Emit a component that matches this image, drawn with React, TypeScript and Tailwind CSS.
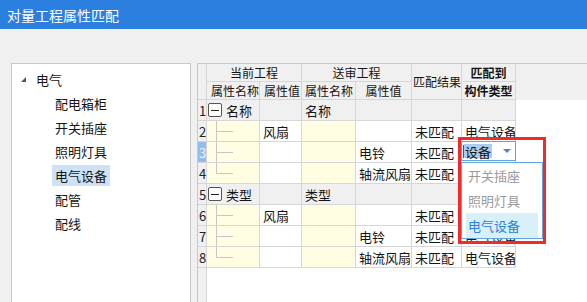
import React from "react";

const line = "border-[#d6d6d6]";

type Row = {
  n: number;
  group?: string;
  v1?: string;
  v3?: string;
  res?: string;
  type?: string;
  tree?: "mid" | "end";
};

// rows 4 and 6 sit under the open dropdown, so their type cell is left blank
const rows: Row[] = [
  { n: 1, group: "名称" },
  { n: 2, v1: "风扇", res: "未匹配", type: "电气设备", tree: "mid" },
  { n: 3, v3: "电铃", res: "未匹配", type: "", tree: "mid" },
  { n: 4, v3: "轴流风扇", res: "未匹配", type: "", tree: "end" },
  { n: 5, group: "类型" },
  { n: 6, v1: "风扇", res: "未匹配", type: "", tree: "mid" },
  { n: 7, v3: "电铃", res: "未匹配", type: "电气设备", tree: "mid" },
  { n: 8, v3: "轴流风扇", res: "未匹配", type: "电气设备", tree: "end" },
];

const treeItems = ["配电箱柜", "开关插座", "照明灯具", "电气设备", "配管", "配线"];

function TreeLine({ kind }: { kind: "mid" | "end" }) {
  return (
    <svg width="52" height="20" className="block">
      <line x1="9.5" y1="0" x2="9.5" y2={kind === "mid" ? 20 : 10.5} stroke="#c6c6c6" />
      <line x1="9.5" y1="10.5" x2="26" y2="10.5" stroke="#c6c6c6" />
    </svg>
  );
}

function Cell({ children, bg = "bg-white", className = "" }: { children?: React.ReactNode; bg?: string; className?: string }) {
  return (
    <div className={`h-[21px] border-r border-b ${line} ${bg} flex items-center overflow-hidden whitespace-nowrap leading-none pl-[3px] ${className}`}>
      {children}
    </div>
  );
}

function HeadCell({ children, className = "" }: { children?: React.ReactNode; className?: string }) {
  return (
    <div className={`border-r border-b ${line} flex items-center justify-center overflow-hidden whitespace-nowrap leading-none text-[12px] ${className}`}>
      {children}
    </div>
  );
}

export default function App() {
  return (
    <div className="w-[587px] h-[302px] overflow-hidden bg-[#f0f0f0] font-['Noto_Sans_CJK_SC',sans-serif] text-[13px] text-[#141414]">
      <div className="h-[29px] bg-[#2b7fdf] text-white text-[14px] pl-[7px] flex items-center leading-none">
        对量工程属性匹配
      </div>

      <div className="flex pt-[34px] h-[273px]">
        {/* left tree */}
        <div className="ml-[11px] w-[180px] h-[250px] shrink-0 bg-white border border-[#c9c9c9] pt-[3px]">
          <div className="h-[24px] flex items-center pl-[9px] leading-none">
            <svg width="5" height="5" className="mr-[10px]">
              <polygon points="5,0 5,5 0,5" fill="#555" />
            </svg>
            <span>电气</span>
          </div>
          {treeItems.map((t) => (
            <div key={t} className="h-[24px] flex items-center pl-[40px] leading-none">
              <span className={`h-[21px] flex items-center px-[3px] ${t === "电气设备" ? "bg-[#cde2f6]" : ""}`}>{t}</span>
            </div>
          ))}
        </div>

        {/* grid panel */}
        <div className="relative ml-[6px] flex-1 flex flex-col bg-white border-t border-l border-[#c8c8c8]">
          <div className="flex bg-[#f0f0f0] shrink-0">
            <div className="grid grid-cols-[9px_53px_42px_54px_56px_50px_54px] grid-rows-[18px_18px]">
              <HeadCell className="row-span-2" />
              <HeadCell className="col-span-2">当前工程</HeadCell>
              <HeadCell className="col-span-2">送审工程</HeadCell>
              <HeadCell className="row-span-2 !justify-start pl-[1px]">匹配结果</HeadCell>
              <HeadCell className="font-bold">匹配到</HeadCell>
              <HeadCell className="!justify-start pl-[4px]">属性名称</HeadCell>
              <HeadCell className="!justify-start pl-[4px]">属性值</HeadCell>
              <HeadCell className="!justify-start pl-[3px]">属性名称</HeadCell>
              <HeadCell>属性值</HeadCell>
              <HeadCell className="font-bold">构件类型</HeadCell>
            </div>
          </div>

          <div className="flex flex-1">
            <div className={`w-[9px] bg-[#f0f0f0] border-r ${line} flex flex-col`}>
              {rows.map((r) => (
                <div
                  key={r.n}
                  className={`h-[21px] border-b ${line} flex items-center leading-none pl-[1px] ${r.n === 3 ? "bg-[#8fbdee] text-[#e8f3ff]" : "text-[#222]"}`}
                >
                  {r.n}
                </div>
              ))}
            </div>

            <div className="grid grid-cols-[53px_42px_54px_56px_50px_54px] auto-rows-[21px] content-start">
              {rows.map((r) =>
                r.group ? (
                  <React.Fragment key={r.n}>
                    <Cell bg="bg-[#f0f0f0]" className="!pl-[1px]">
                      <span className="w-[14px] h-[14px] border border-[#555] rounded-[2px] bg-white flex items-center justify-center mr-[4px] shrink-0">
                        <span className="w-[8px] h-px bg-[#222]" />
                      </span>
                      {r.group}
                    </Cell>
                    <Cell bg="bg-[#f0f0f0]" />
                    <Cell bg="bg-[#f0f0f0]">{r.group}</Cell>
                    <Cell bg="bg-[#f0f0f0]" />
                    <Cell bg="bg-[#f0f0f0]" />
                    <Cell bg="bg-[#f0f0f0]" />
                  </React.Fragment>
                ) : (
                  <React.Fragment key={r.n}>
                    <Cell bg="bg-[#fffee2]" className="!pl-0">
                      <TreeLine kind={r.tree!} />
                    </Cell>
                    <Cell>{r.v1}</Cell>
                    <Cell bg="bg-[#fffee2]" />
                    <Cell>{r.v3}</Cell>
                    <Cell>{r.res}</Cell>
                    <Cell>{r.type}</Cell>
                  </React.Fragment>
                )
              )}
            </div>
          </div>

          {/* editing combo + dropdown */}
          <div className="absolute left-[263px] top-[77px] w-[55px] h-[20px] bg-white border border-[#5ea6dd] flex items-center leading-none">
            <span className="w-px h-[13px] bg-[#555] ml-px" />
            <span className="h-[14px] bg-[#a9cdf0] flex items-center pl-[1px] pr-[1px]">设备</span>
            <svg width="8" height="4" className="ml-[11px]">
              <polygon points="0,0 8,0 4,4" fill="#4a88c8" />
            </svg>
          </div>
          <div className="absolute left-[263px] top-[98px] w-[82px] h-[77px] bg-white border border-[#5ea6dd] leading-none">
            <div className="h-[25px] flex items-center pl-[6px] text-[#9a9a9a]">开关插座</div>
            <div className="h-[25px] flex items-center pl-[6px] text-[#9a9a9a]">照明灯具</div>
            <div className="h-[25px] mx-[4px] flex items-center pl-[2px] bg-[#d8f0fa] text-[#2b7fdf]">电气设备</div>
          </div>
          <div className="absolute left-[260px] top-[73px] w-[88px] h-[107px] border-[3px] border-[#ee2c2c]" />
        </div>
      </div>
    </div>
  );
}
